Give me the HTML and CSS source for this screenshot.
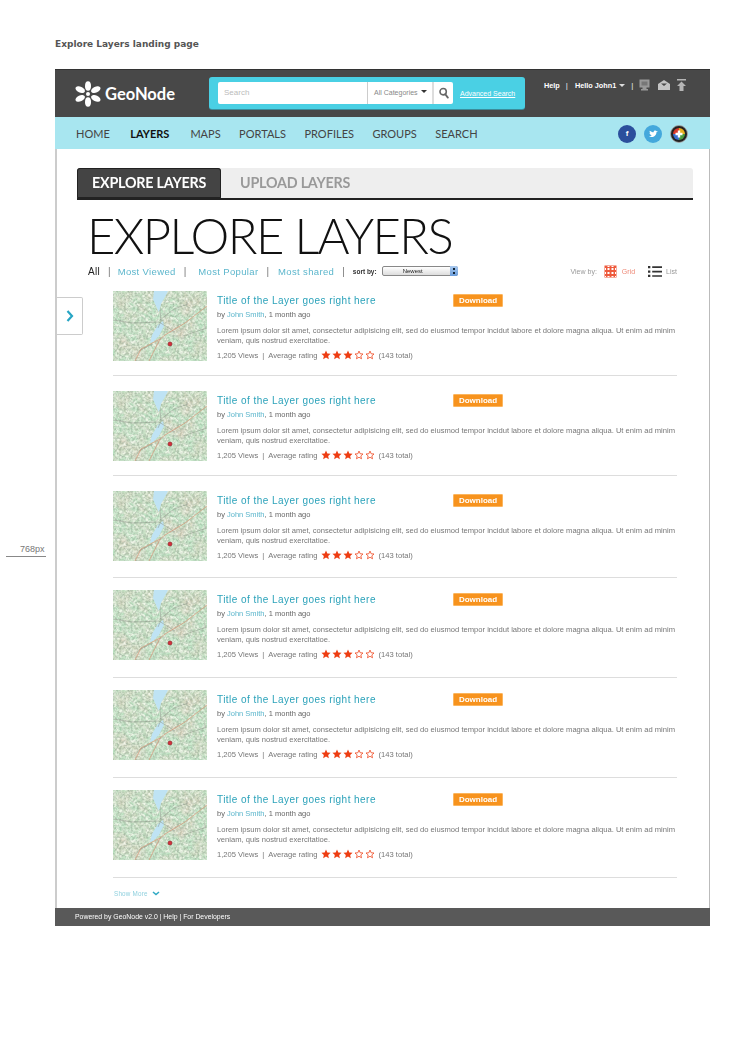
FILE: index.html
```html
<!DOCTYPE html>
<html lang="en">
<head>
<meta charset="utf-8">
<title>Explore Layers landing page</title>
<link rel="stylesheet" href="styles.css">
</head>
<body>
<svg class="defs" width="0" height="0" aria-hidden="true">
  <defs>
    <filter id="patch" x="0" y="0" width="100%" height="100%" color-interpolation-filters="sRGB">
      <feTurbulence type="fractalNoise" baseFrequency="0.06" numOctaves="3" seed="11"/>
      <feColorMatrix values="0 0 0 0 0.86  0 0 0 0 0.83  0 0 0 0 0.75  0 2.4 0 0 -0.95"/>
    </filter>
    <filter id="speck" x="0" y="0" width="100%" height="100%" color-interpolation-filters="sRGB">
      <feTurbulence type="fractalNoise" baseFrequency="0.45" numOctaves="2" seed="7"/>
      <feColorMatrix values="0 0 0 0 0.50  0 0 0 0 0.58  0 0 0 0 0.50  1.2 0 0 0 -0.46"/>
      <feGaussianBlur stdDeviation=".35"/>
    </filter>
    <filter id="light" x="0" y="0" width="100%" height="100%" color-interpolation-filters="sRGB">
      <feTurbulence type="fractalNoise" baseFrequency="0.3" numOctaves="2" seed="23"/>
      <feColorMatrix values="0 0 0 0 0.95  0 0 0 0 0.97  0 0 0 0 0.92  0 0 2.2 0 -0.75"/>
      <feGaussianBlur stdDeviation=".4"/>
    </filter>
    <symbol id="map" viewBox="0 0 94 70">
      <rect width="94" height="70" fill="#c0e6c6"/>
      <rect width="94" height="70" filter="url(#patch)"/>
      <rect width="94" height="70" filter="url(#light)"/>
      <rect width="94" height="70" filter="url(#speck)"/>
      <path d="M41 0h14l-3 6-4 7-2 8-3-6-3-7z" fill="#bfe3f4"/>
      <path d="M50 30l1 5-5 10-6 6-3 1 2-8 6-10z" fill="#bfe3f4"/>
      <path d="M47 19l1 11-3 7M0 29l20 3 26-1 16 10M47 29l14-11 14-5M26 60l13-7M70 45l24-8" fill="none" stroke="#8d9488" stroke-width=".5"/>
      <path d="M94 15L72 32 52 44 47 48 36 70M47 48L28 58 22 70" fill="none" stroke="#d9977a" stroke-width=".7"/>
      <circle cx="57" cy="53" r="2" fill="#d5303c" stroke="#8c2028" stroke-width=".6"/>
    </symbol>
    <symbol id="star-full" viewBox="0 0 12 12">
      <path d="M6 .6l1.600 3.600 3.900.4-2.900 2.600.8 3.900L6 9.100l-3.400 2 .8-3.900L.5 4.600l3.900-.4z" fill="#ee3d12"/>
    </symbol>
    <symbol id="star-empty" viewBox="0 0 12 12">
      <path d="M6 1.300l1.400 3.200 3.400.3-2.600 2.300.8 3.400L6 8.700l-3 1.800.8-3.400L1.200 4.800l3.400-.3z" fill="none" stroke="#ee3d12" stroke-width=".9"/>
    </symbol>
  </defs>
</svg>

<h1 class="sheet-title">Explore Layers landing page</h1>

<div class="frame">
  <header class="topbar">
    <div class="logo">
      <svg class="logo-mark" viewBox="0 0 26 26" aria-hidden="true">
        <g fill="#fff">
          <ellipse cx="13" cy="5" rx="3" ry="4.700"/>
          <ellipse cx="13" cy="21" rx="3" ry="4.700"/>
          <ellipse cx="5.200" cy="8.600" rx="5" ry="3" transform="rotate(25 5.200 8.600)"/>
          <ellipse cx="20.800" cy="8.600" rx="5" ry="3" transform="rotate(-25 20.800 8.600)"/>
          <ellipse cx="5.200" cy="17.400" rx="5" ry="3" transform="rotate(-25 5.200 17.400)"/>
          <ellipse cx="20.800" cy="17.400" rx="5" ry="3" transform="rotate(25 20.800 17.400)"/>
          <circle cx="13" cy="13" r="2"/>
        </g>
      </svg>
      <span class="logo-text">GeoNode</span>
    </div>
    <div class="searchbox">
      <div class="search-field">
        <span class="search-input">Search</span>
        <span class="search-cat">All Categories <i class="caret caret-dark"></i></span>
        <span class="search-btn">
          <svg viewBox="0 0 14 14" aria-hidden="true"><circle cx="6" cy="5.500" r="3.700" fill="none" stroke="#666" stroke-width="1.800"/><path d="M8.500 8.500l3 3.800" stroke="#666" stroke-width="2.200" stroke-linecap="round"/></svg>
        </span>
      </div>
      <a class="adv-link">Advanced Search</a>
    </div>
    <div class="usermenu">
      <b>Help</b><span class="pipe">|</span><b>Hello John1</b><i class="caret caret-light"></i><span class="pipe pipe-b">|</span>
      <svg class="uicon" viewBox="0 0 11 12" aria-hidden="true"><path d="M.5 .5h10v8H7.500V10H9v1.500H2V10h1.500V8.500h-3z" fill="#999"/><path d="M2.500 2.500h6v4h-6z" fill="#777"/></svg>
      <svg class="uicon uicon-mail" viewBox="0 0 12 10" aria-hidden="true"><path d="M0 4l6-4 6 4v6H0z" fill="#c4c4c4"/><path d="M3 3.500h6L6 6z" fill="#484848"/></svg>
      <svg class="uicon uicon-up" viewBox="0 0 9 12" aria-hidden="true"><path d="M0 0h9v1.500H0zM4.500 2.500L9 7H6.500v5h-4V7H0z" fill="#b5b5b5"/></svg>
    </div>
  </header>

  <nav class="mainnav">
    <a>HOME</a>
    <a class="active">LAYERS</a>
    <a>MAPS</a>
    <a>PORTALS</a>
    <a>PROFILES</a>
    <a>GROUPS</a>
    <a>SEARCH</a>
    <div class="social">
      <span class="soc soc-fb">f</span>
      <span class="soc soc-tw"><svg viewBox="0 0 10 8" aria-hidden="true"><path d="M0 7c3 1.200 8 .2 8.300-5L10 .8 8.500 1C7.500-.3 5 0 5.100 2 3.500 2 2 1.200 .9.300c-.6 1 0 2 .6 2.500L.6 2.600c0 1 .8 1.800 1.500 2H1.300c.3.700 1 1.100 1.700 1.100C2.200 6.500 1 7 0 7z" fill="#fff"/></svg></span>
      <span class="soc soc-gp"><svg viewBox="0 0 18 18" aria-hidden="true"><circle cx="9" cy="9" r="8.500" fill="#222" stroke="#aaa" stroke-width=".8"/><path d="M9 3a6 6 0 0 1 6 6H9z" fill="#e8b21e"/><path d="M15 9a6 6 0 0 1-6 6V9z" fill="#4c9d3f"/><path d="M9 15a6 6 0 0 1-6-6h6z" fill="#3a6fd0"/><path d="M3 9a6 6 0 0 1 6-6v6z" fill="#d8392b"/><path d="M7.800 5.500h2.400v2.300h2.300v2.400h-2.300v2.300H7.800v-2.300H5.500V7.800h2.300z" fill="#fff"/></svg></span>
    </div>
  </nav>

  <main class="content">
    <div class="tabs">
      <div class="tab tab-active">EXPLORE LAYERS</div>
      <div class="tab">UPLOAD LAYERS</div>
    </div>

    <h2 class="headline">EXPLORE LAYERS</h2>

    <div class="filters">
      <a class="f-all">All</a><span class="f-sep">|</span>
      <a class="f-link">Most Viewed</a><span class="f-sep f-wide">|</span>
      <a class="f-link">Most Popular</a><span class="f-sep f-mid">|</span>
      <a class="f-link">Most shared</a><span class="f-sep">|</span>
      <span class="sort-label">sort by:</span>
      <span class="sort-select">Newest<i class="stepper"></i></span>
      <div class="viewby">
        <span class="vb-label">View by:</span>
        <svg class="vb-grid" viewBox="0 0 13 13" aria-hidden="true"><rect x=".5" y=".5" width="12" height="12" fill="#ee5a3c"/><path d="M3.500 3h2v2h-2zM7.500 3h2v2h-2zM3.500 7h2v2h-2zM7.500 7h2v2h-2zM1 3h1v2H1zM11 3h1v2h-1zM1 7h1v2H1zM11 7h1v2h-1zM1 11h1v1H1zM3.500 11h2v1h-2zM7.500 11h2v1h-2zM11 11h1v1h-1zM3.500 1h2v1h-2zM7.500 1h2v1h-2z" fill="#fff"/></svg>
        <span class="vb-grid-label">Grid</span>
        <svg class="vb-list" viewBox="0 0 15 13" aria-hidden="true"><path d="M0 .5h2.500v2.500H0zM0 5.300h2.500v2.500H0zM0 10h2.500v2.500H0zM4.500 1h10.500v1.800H4.500zM4.500 5.700h10.500v1.800H4.500zM4.500 10.400h10.500v1.800H4.500z" fill="#333"/></svg>
        <span class="vb-list-label">List</span>
      </div>
    </div>

    <div class="layers">
      <article class="layer">
        <svg class="thumb" aria-hidden="true"><use href="#map"/></svg>
        <div class="layer-body">
          <div class="layer-head"><a class="layer-title">Title of the Layer goes right here</a><span class="dl">Download</span></div>
          <p class="byline">by <a>John Smith</a>, 1 month ago</p>
          <p class="desc">Lorem ipsum dolor sit amet, consectetur adipisicing elit, sed do eiusmod tempor incidut labore et dolore magna aliqua. Ut enim ad minim veniam, quis nostrud exercitatioe.</p>
          <div class="meta">1,205 Views<span class="m-sep">|</span>Average rating
            <span class="stars"><svg><use href="#star-full"/></svg><svg><use href="#star-full"/></svg><svg><use href="#star-full"/></svg><svg><use href="#star-empty"/></svg><svg><use href="#star-empty"/></svg></span>(143 total)</div>
        </div>
      </article>
      <article class="layer">
        <svg class="thumb" aria-hidden="true"><use href="#map"/></svg>
        <div class="layer-body">
          <div class="layer-head"><a class="layer-title">Title of the Layer goes right here</a><span class="dl">Download</span></div>
          <p class="byline">by <a>John Smith</a>, 1 month ago</p>
          <p class="desc">Lorem ipsum dolor sit amet, consectetur adipisicing elit, sed do eiusmod tempor incidut labore et dolore magna aliqua. Ut enim ad minim veniam, quis nostrud exercitatioe.</p>
          <div class="meta">1,205 Views<span class="m-sep">|</span>Average rating
            <span class="stars"><svg><use href="#star-full"/></svg><svg><use href="#star-full"/></svg><svg><use href="#star-full"/></svg><svg><use href="#star-empty"/></svg><svg><use href="#star-empty"/></svg></span>(143 total)</div>
        </div>
      </article>
      <article class="layer">
        <svg class="thumb" aria-hidden="true"><use href="#map"/></svg>
        <div class="layer-body">
          <div class="layer-head"><a class="layer-title">Title of the Layer goes right here</a><span class="dl">Download</span></div>
          <p class="byline">by <a>John Smith</a>, 1 month ago</p>
          <p class="desc">Lorem ipsum dolor sit amet, consectetur adipisicing elit, sed do eiusmod tempor incidut labore et dolore magna aliqua. Ut enim ad minim veniam, quis nostrud exercitatioe.</p>
          <div class="meta">1,205 Views<span class="m-sep">|</span>Average rating
            <span class="stars"><svg><use href="#star-full"/></svg><svg><use href="#star-full"/></svg><svg><use href="#star-full"/></svg><svg><use href="#star-empty"/></svg><svg><use href="#star-empty"/></svg></span>(143 total)</div>
        </div>
      </article>
      <article class="layer">
        <svg class="thumb" aria-hidden="true"><use href="#map"/></svg>
        <div class="layer-body">
          <div class="layer-head"><a class="layer-title">Title of the Layer goes right here</a><span class="dl">Download</span></div>
          <p class="byline">by <a>John Smith</a>, 1 month ago</p>
          <p class="desc">Lorem ipsum dolor sit amet, consectetur adipisicing elit, sed do eiusmod tempor incidut labore et dolore magna aliqua. Ut enim ad minim veniam, quis nostrud exercitatioe.</p>
          <div class="meta">1,205 Views<span class="m-sep">|</span>Average rating
            <span class="stars"><svg><use href="#star-full"/></svg><svg><use href="#star-full"/></svg><svg><use href="#star-full"/></svg><svg><use href="#star-empty"/></svg><svg><use href="#star-empty"/></svg></span>(143 total)</div>
        </div>
      </article>
      <article class="layer">
        <svg class="thumb" aria-hidden="true"><use href="#map"/></svg>
        <div class="layer-body">
          <div class="layer-head"><a class="layer-title">Title of the Layer goes right here</a><span class="dl">Download</span></div>
          <p class="byline">by <a>John Smith</a>, 1 month ago</p>
          <p class="desc">Lorem ipsum dolor sit amet, consectetur adipisicing elit, sed do eiusmod tempor incidut labore et dolore magna aliqua. Ut enim ad minim veniam, quis nostrud exercitatioe.</p>
          <div class="meta">1,205 Views<span class="m-sep">|</span>Average rating
            <span class="stars"><svg><use href="#star-full"/></svg><svg><use href="#star-full"/></svg><svg><use href="#star-full"/></svg><svg><use href="#star-empty"/></svg><svg><use href="#star-empty"/></svg></span>(143 total)</div>
        </div>
      </article>
      <article class="layer">
        <svg class="thumb" aria-hidden="true"><use href="#map"/></svg>
        <div class="layer-body">
          <div class="layer-head"><a class="layer-title">Title of the Layer goes right here</a><span class="dl">Download</span></div>
          <p class="byline">by <a>John Smith</a>, 1 month ago</p>
          <p class="desc">Lorem ipsum dolor sit amet, consectetur adipisicing elit, sed do eiusmod tempor incidut labore et dolore magna aliqua. Ut enim ad minim veniam, quis nostrud exercitatioe.</p>
          <div class="meta">1,205 Views<span class="m-sep">|</span>Average rating
            <span class="stars"><svg><use href="#star-full"/></svg><svg><use href="#star-full"/></svg><svg><use href="#star-full"/></svg><svg><use href="#star-empty"/></svg><svg><use href="#star-empty"/></svg></span>(143 total)</div>
        </div>
      </article>
    </div>

    <a class="show-more">Show More
      <svg viewBox="0 0 8 5" aria-hidden="true"><path d="M1 1l3 2.600L7 1" fill="none" stroke="#2fa9c4" stroke-width="1.500"/></svg>
    </a>

    <div class="sidetab">
      <svg viewBox="0 0 8 12" aria-hidden="true"><path d="M1.500 1l4.500 5-4.500 5" fill="none" stroke="#27a5c4" stroke-width="2.200"/></svg>
    </div>
  </main>

  <footer class="footer">Powered by GeoNode v2.0 | Help | For Developers</footer>
</div>

<div class="dim-note">768px</div>
</body>
</html>
```
FILE: styles.css
```css
* { box-sizing: border-box; }
html, body { margin: 0; padding: 0; }
body {
  position: relative;
  width: 750px;
  height: 1055px;
  overflow: hidden;
  background: #fff;
  font-family: "Liberation Sans", Arial, sans-serif;
  color: #666;
}
a { text-decoration: none; }
p { margin: 0; }
.defs { position: absolute; }

.sheet-title {
  margin: 0;
  padding: 38px 0 0 55px;
  height: 69px;
  font: bold 9px/12px "DejaVu Sans", sans-serif;
  color: #555;
}

.frame {
  width: 655px;
  margin-left: 55px;
  border-left: 2px solid #ccc;
  border-right: 1px solid #bbb;
  opacity: .999;
}

/* header */
.topbar {
  display: flex;
  height: 48px;
  margin-left: -2px;
  margin-right: -1px;
  background: #484848;
  border-top: 1px solid #333;
  padding-left: 20px;
}
.logo { display: flex; align-items: center; width: 134px; height: 47px; }
.logo-mark { width: 26px; height: 26px; flex: none; }
.logo-text {
  margin-left: 4px;
  font: bold 16.500px/24px Lato, sans-serif;
  color: #fff;
}
.searchbox {
  display: flex;
  align-items: center;
  width: 316px;
  height: 32px;
  margin-top: 7px;
  padding: 0 9px;
  background: #4ad0e4;
  border-radius: 3px;
  box-shadow: 0 1px 0 #3b8d9b;
}
.search-field {
  display: flex;
  width: 235px;
  height: 22px;
  background: #fff;
  border-radius: 2px;
  font-size: 7px;
  line-height: 22px;
  color: #888;
}
.search-input { width: 149px; padding-left: 6px; color: #bbb; font-size: 8px; }
.search-cat {
  width: 65px;
  padding-left: 6px;
  border-left: 1px solid #ccc;
  white-space: nowrap;
}
.search-btn {
  display: flex;
  align-items: center;
  justify-content: center;
  width: 21px;
  border-left: 2px solid #ddd;
}
.search-btn svg { width: 12px; height: 12px; }
.caret {
  display: inline-block;
  width: 0;
  height: 0;
  border-left: 3px solid transparent;
  border-right: 3px solid transparent;
  vertical-align: 2px;
}
.caret-dark { border-top: 3px solid #333; margin-left: 1px; }
.caret-light { border-top: 3px solid #ddd; margin-left: 3px; }
.adv-link {
  margin-left: 7px;
  font-size: 7px;
  color: #fff;
  text-decoration: underline;
  white-space: nowrap;
}
.usermenu {
  display: flex;
  align-items: center;
  height: 12px;
  margin: 9px 0 0 19px;
  font-size: 7.300px;
  color: #fff;
  white-space: nowrap;
}
.usermenu b { font-weight: bold; }
.pipe { margin: 0 7px 0 6px; font-size: 8px; color: #eee; }
.pipe-b { margin: 0 6px 0 6px; }
.uicon { width: 11px; height: 12px; }
.uicon-mail { width: 12px; height: 10px; margin-left: 8px; }
.uicon-up { width: 9px; margin-left: 7px; }

/* nav */
.mainnav {
  display: flex;
  align-items: center;
  height: 32px;
  margin-left: -2px;
  margin-right: -1px;
  padding: 1px 0 0 21px;
  background: #a8e6f0;
  font: 400 11px/31px Lato, sans-serif;
  color: #444;
}
.mainnav a { margin-right: 18.500px; }
.mainnav .active { margin: 0 21px 0 2px; font-weight: bold; color: #111; }
.social { display: flex; gap: 8px; margin-left: auto; margin-right: 22px; }
.soc {
  display: flex;
  align-items: center;
  justify-content: center;
  width: 18px;
  height: 18px;
  border-radius: 50%;
}
.soc-fb { background: #2b4f9c; color: #fff; font: bold 8px/18px "Liberation Sans", sans-serif; }
.soc-tw { background: #44a8dc; }
.soc-tw svg { width: 9px; height: 8px; }
.soc-gp svg { width: 18px; height: 18px; }

/* content */
.content { position: relative; height: 759px; padding: 19px 16px 0 20px; }
.tabs {
  display: flex;
  height: 32px;
  background: #eee;
  border-bottom: 2px solid #222;
  border-radius: 3px 3px 0 0;
}
.tab {
  padding: 0 19px;
  font: bold 14.300px/30px Lato, sans-serif;
  color: #999;
  letter-spacing: -.2px;
  white-space: nowrap;
}
.tab-active {
  width: 144px;
  padding: 0 0 0 15px;
  background: #444;
  color: #fff;
  border-radius: 3px 3px 0 0;
  outline: 1px solid #222;
  outline-offset: -1px;
}
.headline {
  margin: 10px 0 0 10px;
  height: 50px;
  font: 300 49px/50px Lato, sans-serif;
  letter-spacing: -1.600px;
  color: #111;
  white-space: nowrap;
}
.filters {
  display: flex;
  align-items: center;
  height: 14px;
  margin: 4px 0 0 11px;
  font-size: 9.500px;
  white-space: nowrap;
}
.f-all { color: #222; font-size: 10px; letter-spacing: .3px; }
.f-link { color: #5cb6cc; letter-spacing: .35px; }
.f-sep { margin: 0 7px 0 8px; color: #777; font-size: 10px; }
.f-wide { margin: 0 12px 0 8px; }
.f-mid { margin: 0 9px 0 8px; }
.sort-label { margin-left: 1px; font-size: 6.500px; font-weight: bold; color: #333; }
.sort-select {
  position: relative;
  width: 76px;
  height: 10px;
  margin-left: 5px;
  padding-right: 14px;
  text-align: center;
  font-size: 6px;
  line-height: 8px;
  color: #222;
  background: linear-gradient(#fff, #ddd);
  border: 1px solid #888;
  border-radius: 2px;
}
.stepper {
  position: absolute;
  top: -1px;
  right: -1px;
  width: 8px;
  height: 10px;
  border-radius: 0 2px 2px 0;
  background: radial-gradient(circle at 50% 30%, #123 0 1px, transparent 1.200px),
              radial-gradient(circle at 50% 70%, #123 0 1px, transparent 1.200px),
              linear-gradient(#a9c9ee, #6a9ddb);
}
.viewby { display: flex; align-items: center; margin-left: auto; margin-right: 16px; font-size: 7px; color: #999; }
.vb-grid { width: 13px; height: 13px; margin-left: 7px; }
.vb-grid-label { margin-left: 5px; color: #ee8a78; }
.vb-list { width: 14px; height: 13px; margin-left: 13px; }
.vb-list-label { margin-left: 4px; }

/* layer list */
.layers { margin: 13px 16px 0 36px; }
.layer {
  display: flex;
  height: 85px;
  border-bottom: 1px solid #ddd;
}
.layer + .layer { padding-top: 12px; height: 100px; }
.layer:nth-child(2) { padding-top: 15px; }
.layer:nth-child(3) { padding-top: 15px; height: 102px; }
.thumb { width: 94px; height: 70px; flex: none; }
.layer-body { flex: 1; min-width: 0; padding: 3px 0 0 10px; }
.layer-head { display: flex; align-items: center; height: 12px; }
.layer-title {
  width: 236px;
  font-size: 10px;
  color: #2ba2ba;
  letter-spacing: .45px;
  white-space: nowrap;
}
.dl {
  width: 50px;
  height: 13px;
  background: #f7931e;
  border: 1px solid #fbb55e;
  border-radius: 1px;
  font-size: 8px;
  font-weight: bold;
  line-height: 11px;
  text-align: center;
  color: #fff;
}
.byline { margin-top: 4px; font-size: 7.500px; line-height: 10px; color: #666; }
.byline a { color: #5cb6cc; }
.desc { margin-top: 6px; font-size: 7.600px; line-height: 10px; color: #777; }
.meta {
  display: flex;
  align-items: center;
  margin-top: 3px;
  height: 12px;
  font-size: 7.600px;
  color: #777;
  white-space: nowrap;
}
.m-sep { margin: 0 4px; }
.stars { display: flex; margin: 0 2px 0 4px; }
.stars svg { width: 10px; height: 10px; margin-right: 1px; }
.show-more {
  display: flex;
  align-items: center;
  margin: 12px 0 0 37px;
  font-size: 6.300px;
  letter-spacing: .2px;
  color: #8fd0de;
}
.show-more svg { width: 8px; height: 5px; margin-left: 4px; }
.sidetab {
  position: absolute;
  top: 148px;
  left: 0;
  display: flex;
  align-items: center;
  justify-content: center;
  width: 26px;
  height: 38px;
  background: #fff;
  border: 1px solid #ccc;
  border-left: 0;
  border-radius: 0 2px 2px 0;
}
.sidetab svg { width: 8px; height: 12px; }

/* footer */
.footer {
  height: 18px;
  margin-left: -2px;
  margin-right: -1px;
  padding-left: 20px;
  background: #595959;
  font-size: 6.900px;
  line-height: 17px;
  color: #fff;
}

/* annotation beside the page */
.dim-note {
  position: absolute;
  left: 6px;
  top: 543px;
  width: 40px;
  height: 14px;
  padding-left: 14px;
  border-bottom: 1px solid #888;
  font-size: 9px;
  line-height: 13px;
  color: #777;
}
```
